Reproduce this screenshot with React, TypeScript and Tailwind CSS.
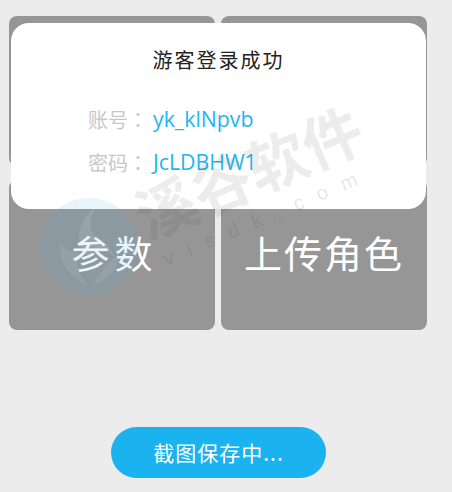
export default function App() {
  const cjk = "font-['Noto_Sans_CJK_SC','Noto_Sans_CJK_JP',sans-serif]";
  return (
    <div className={`relative w-[452px] h-[492px] overflow-hidden bg-[#ececec] ${cjk}`}>
      <div className="pt-4 pl-[9px] w-[427px] grid grid-cols-[206px_206px] gap-x-[6px] gap-y-[14px]">
        <div className="h-[150px] rounded-lg bg-[#969696]" />
        <div className="h-[150px] rounded-lg bg-[#969696]" />
        <div className="h-[150px] rounded-lg bg-[#969696] flex justify-center pt-[47px]">
          <span className="ml-[5px] text-[38px] leading-[50px] text-white tracking-[5px]">参数</span>
        </div>
        <div className="h-[150px] rounded-lg bg-[#969696] flex justify-center pt-[47px]">
          <span className="text-[38px] leading-[50px] text-white tracking-[2px]">上传角色</span>
        </div>
      </div>

      <div className="w-[437px] flex justify-center pt-[97px]">
        <div className="w-[215px] h-[51px] rounded-full bg-[#1ab2ef] flex items-center justify-center text-[21px] tracking-[1px] text-white">
          截图保存中...
        </div>
      </div>

      <div className="absolute left-[11px] top-[23px] w-[415px] h-[186px] rounded-[18px] bg-white">
        <div className="pt-[22px] text-center text-[20px] leading-[30px] tracking-[2px] text-[#222222]">游客登录成功</div>
        <div className="mt-[28px] flex items-center h-[32px]">
          <span className="w-[142px] pt-[1px] pr-[5px] text-right text-[20px] text-[#c8c8c8] font-['Noto_Sans_CJK_TC','Noto_Sans_CJK_SC',sans-serif]">账号：</span>
          <span className="font-['Open_Sans',sans-serif] text-[21.3px] text-[#22b5ef]">yk_klNpvb</span>
        </div>
        <div className="mt-[11px] flex items-center h-[32px]">
          <span className="w-[142px] pt-[2px] pr-[5px] text-right text-[20px] text-[#c8c8c8] font-['Noto_Sans_CJK_TC','Noto_Sans_CJK_SC',sans-serif]">密码：</span>
          <span className="font-['Open_Sans',sans-serif] text-[21.3px] text-[#22b5ef]">JcLDBHW1</span>
        </div>
      </div>

      {/* watermark */}
      <svg className="absolute left-[40px] top-[198px] w-[98px] h-[98px] pointer-events-none" viewBox="0 0 98 98">
        <circle cx="49" cy="49" r="49" fill="#4ab4e6" fillOpacity="0.13" />
        <path d="M58 6C44 18 36 32 40 46C42 54 47 58 49 62C54 54 66 50 74 58C70 46 58 42 52 34C48 26 52 14 58 6Z" fill="#ffffff" fillOpacity="0.1" />
        <path d="M20 44C18 62 28 78 48 88C36 72 34 62 40 52C32 56 24 52 20 44Z" fill="#ffffff" fillOpacity="0.08" />
        <path d="M78 56C80 70 68 82 52 88C60 76 66 66 78 56Z" fill="#ffffff" fillOpacity="0.08" />
      </svg>
      <div className="absolute left-[115px] top-[130px] w-[266px] text-center rotate-[-23deg] origin-center text-[60px] leading-[80px] font-bold text-[#444444]/10 whitespace-nowrap pointer-events-none">
        溪谷软件
      </div>
      <div className="absolute left-[137px] top-[204px] w-[260px] text-center rotate-[-23deg] origin-center font-['Liberation_Sans',sans-serif] text-[20px] leading-[24px] tracking-[15px] text-[#444444]/15 whitespace-nowrap pointer-events-none">
        visdk.com
      </div>
    </div>
  );
}
